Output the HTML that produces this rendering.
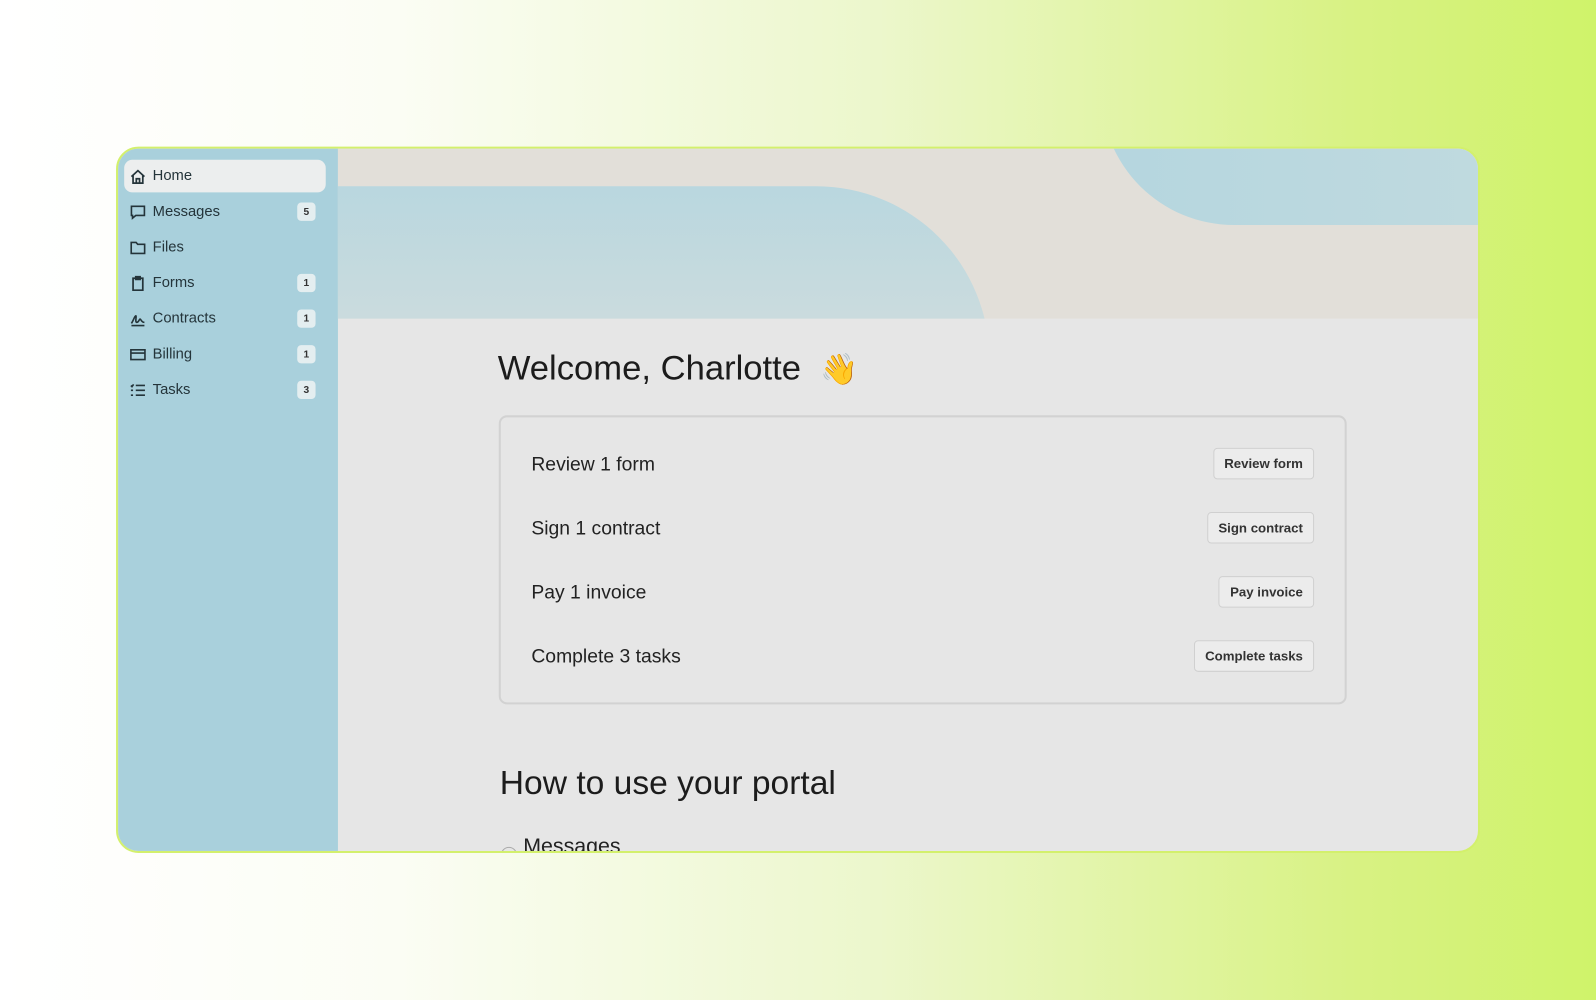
<!DOCTYPE html>
<html><head><meta charset="utf-8"><style>
*{box-sizing:border-box;margin:0;padding:0}
html,body{width:1596px;height:1000px;overflow:hidden}
body{background:linear-gradient(90deg,#ffffff 0%,#fbfdf4 25%,#ecf7cc 55%,#d8f283 85%,#cff36a 100%);font-family:"Liberation Sans",sans-serif;position:relative}
.wrap{position:absolute;left:0;top:0;width:1568px;height:982px;transform:scale(1.0179);transform-origin:0 0}
.panel{position:absolute;left:114px;top:144px;width:1340px;height:694px;border:2px solid #d3f06c;border-radius:22px;overflow:hidden;background:#e6e6e6}
.side{position:absolute;left:0;top:0;width:216px;height:100%;background:#a9d0dc}
.nav{position:absolute;left:6px;width:198px;height:32px;display:flex;align-items:center;font-size:14.5px;color:#24343a}
.nav.active{background:#eceeee;border-radius:8px}
.nav svg{position:absolute;left:5px;width:17px;height:17px}
.nav span.t{position:absolute;left:28px}
.badge{position:absolute;right:10px;width:18px;height:18px;background:#e4eef0;border-radius:4px;font-size:10px;font-weight:bold;display:flex;align-items:center;justify-content:center;color:#333}
.header{position:absolute;left:216px;top:0;right:0;height:167px;background:#e2dfd9;overflow:hidden}
.s1{position:absolute;left:-20px;top:37px;width:660px;height:300px;border-radius:20px 170px 0 0;background:linear-gradient(180deg,#b9d7df,#d5dedd 70%)}
.s2{position:absolute;left:750px;top:-100px;width:500px;height:175px;border-radius:0 0 0 130px;background:linear-gradient(90deg,#b5d6df,#c3dbdf)}
h1{position:absolute;left:373px;top:197px;font-size:34px;font-weight:normal;color:#1c1c1c}
h2{position:absolute;left:375px;top:604px;font-size:33px;font-weight:normal;color:#1c1c1c}
.card{position:absolute;left:374px;top:262px;width:833px;height:284px;border:2px solid #d2d2d2;border-radius:8px}
.row{position:absolute;left:30px;font-size:19px;color:#222;font-weight:500}
.btn{position:absolute;right:30px;height:31px;padding:0 10px;border:1.5px solid #d0d0d0;border-radius:4px;background:#ececec;font-size:13px;font-weight:bold;color:#333;display:flex;align-items:center}
.msg{position:absolute;left:376px;top:674px;font-size:21px;color:#222}
</style></head><body>
<div class="wrap">
<div class="panel">
<div class="side">
 <div class="nav active" style="top:11px"><svg viewBox="0 0 16 16" fill="none" stroke="#24343a" stroke-width="1.6"><path d="M2 8L8 2.5L14 8M3.5 6.8V14h9V6.8M6.5 14V10h3v4"/></svg><span class="t">Home</span></div>
 <div class="nav" style="top:46px"><svg viewBox="0 0 16 16" fill="none" stroke="#24343a" stroke-width="1.5"><path d="M2 2.5h12v8.5H6l-3 2.5V11H2z"/></svg><span class="t">Messages</span><span class="badge">5</span></div>
 <div class="nav" style="top:81px"><svg viewBox="0 0 16 16" fill="none" stroke="#24343a" stroke-width="1.5"><path d="M1.8 3h4.5l1.5 1.7h6.4v8.5H1.8z"/></svg><span class="t">Files</span></div>
 <div class="nav" style="top:116px"><svg viewBox="0 0 16 16" fill="none" stroke="#24343a" stroke-width="1.6"><path d="M3.5 3.2h9v11h-9z M6 1.8h4v2.4H6z"/></svg><span class="t">Forms</span><span class="badge">1</span></div>
 <div class="nav" style="top:151px"><svg viewBox="0 0 16 16" fill="none" stroke="#24343a" stroke-width="1.5"><path d="M2 12c2-3 3-7 4-7s-1 6 1 6 2-3 3-3 1 3 4 3M2 14h12"/></svg><span class="t">Contracts</span><span class="badge">1</span></div>
 <div class="nav" style="top:186px"><svg viewBox="0 0 16 16" fill="none" stroke="#24343a" stroke-width="1.5"><path d="M1.5 3.5h13v9h-13zM1.5 6.5h13"/></svg><span class="t">Billing</span><span class="badge">1</span></div>
 <div class="nav" style="top:221px"><svg viewBox="0 0 16 16" fill="none" stroke="#24343a" stroke-width="1.5"><path d="M6 3.5h8.5M6 8h8.5M6 12.5h8.5M1.5 3.5l1 1 1.5-2M1.5 8h2M1.5 12.5h2"/></svg><span class="t">Tasks</span><span class="badge">3</span></div>
</div>
<div class="header"><div class="s1"></div><div class="s2"></div></div>
<h1>Welcome, Charlotte &nbsp;<span style="font-size:30px">👋</span></h1>
<div class="card">
 <div class="row" style="top:36px">Review 1 form</div><div class="btn" style="top:30px">Review form</div>
 <div class="row" style="top:99px">Sign 1 contract</div><div class="btn" style="top:93px">Sign contract</div>
 <div class="row" style="top:162px">Pay 1 invoice</div><div class="btn" style="top:156px">Pay invoice</div>
 <div class="row" style="top:225px">Complete 3 tasks</div><div class="btn" style="top:219px">Complete tasks</div>
</div>
<h2>How to use your portal</h2>
<div class="msg"><span style="display:inline-block;width:16px;height:16px;border:1.5px solid #aaa;border-radius:50%;vertical-align:-2px;margin-right:6px;font-size:8px;line-height:10px;text-align:center;color:#888">···</span>Messages</div>
</div>
</div>
</body></html>
